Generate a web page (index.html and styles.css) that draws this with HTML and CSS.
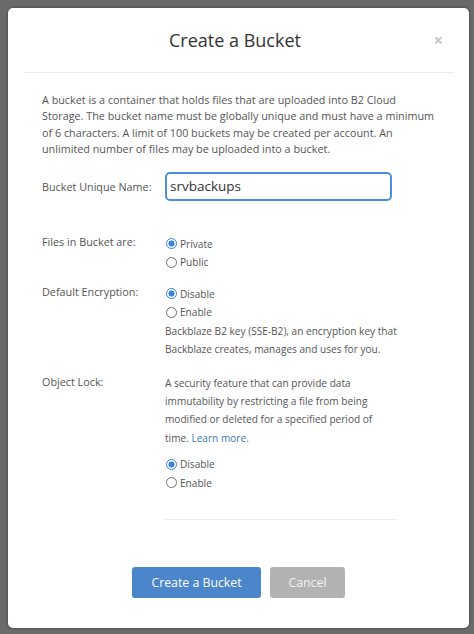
FILE: index.html
```html
<!DOCTYPE html>
<html lang="en">
<head>
<meta charset="utf-8">
<title>Create a Bucket</title>
<link rel="stylesheet" href="styles.css">
</head>
<body>
<div class="modal">
  <div class="modal-header">
    <h2 class="modal-title">Create a Bucket</h2>
    <span class="close">&times;</span>
  </div>
  <div class="modal-body">
    <p class="intro">A bucket is a container that holds files that are uploaded into B2 Cloud Storage. The bucket name must be globally unique and must have a minimum of 6 characters. A limit of 100 buckets may be created per account. An unlimited number of files may be uploaded into a bucket.</p>

    <div class="row row-name">
      <label class="row-label" for="bname">Bucket Unique Name:</label>
      <div class="row-field"><input id="bname" class="name-input" type="text" value="srvbackups"></div>
    </div>

    <div class="row row-files">
      <div class="row-label">Files in Bucket are:</div>
      <div class="row-field">
        <label class="opt"><input type="radio" name="files" checked><span>Private</span></label>
        <label class="opt"><input type="radio" name="files"><span>Public</span></label>
      </div>
    </div>

    <div class="row row-enc">
      <div class="row-label">Default Encryption:</div>
      <div class="row-field">
        <label class="opt"><input type="radio" name="enc" checked><span>Disable</span></label>
        <label class="opt"><input type="radio" name="enc"><span>Enable</span></label>
        <p class="note">Backblaze B2 key (SSE-B2), an encryption key that Backblaze creates, manages and uses for you.</p>
      </div>
    </div>

    <div class="row row-lock">
      <div class="row-label">Object Lock:</div>
      <div class="row-field">
        <p class="note lock-note">A security feature that can provide data immutability by restricting a file from being modified or deleted for a specified period of time. <a href="#" class="link">Learn more.</a></p>
        <label class="opt"><input type="radio" name="lock" checked><span>Disable</span></label>
        <label class="opt"><input type="radio" name="lock"><span>Enable</span></label>
        <hr class="field-rule">
      </div>
    </div>
  </div>
  <div class="modal-footer">
    <button class="btn btn-primary">Create a Bucket</button>
    <button class="btn btn-cancel">Cancel</button>
  </div>
</div>
</body>
</html>
```

FILE: styles.css
```css
* { box-sizing: border-box; }

html, body {
  margin: 0;
  height: 100%;
}

body {
  background: #6a6a6a;
  padding: 8px 5px 6px 8px;
  font-family: "Open Sans", "Noto Sans", "Liberation Sans", sans-serif;
  color: #555;
}

.modal {
  background: #fff;
  border-radius: 5px;
  height: 620px;
  width: 461px;
  display: flex;
  flex-direction: column;
  box-shadow: 0 0 3px rgba(0,0,0,0.45);
}

.modal-header {
  position: relative;
  height: 65px;
  margin: 0 15px 0 16px;
  border-bottom: 1px solid #ececec;
  display: flex;
  align-items: center;
  justify-content: center;
}

.modal-title {
  margin: 0 0 0 -8px;
  font-weight: 400;
  font-size: 18px;
  color: #333;
}

.close {
  position: absolute;
  right: 11px;
  top: 22px;
  font-size: 16px;
  line-height: 20px;
  color: #c4c4c4;
  font-weight: 700;
}

.modal-body {
  padding: 19px 30px 0 34px;
  flex: 1;
}

.intro {
  margin: 0;
  font-size: 10.8px;
  line-height: 16.4px;
}

.row {
  display: flex;
  font-size: 10.8px;
}

.row-label {
  width: 123px;
  flex: none;
  color: #555;
}

.row-field {
  width: 232px;
  flex: none;
}

.row-name {
  margin-top: 14px;
  align-items: center;
}

.name-input {
  width: 227px;
  height: 29px;
  border: 2px solid #4a8fdb;
  border-radius: 5px;
  padding: 0 3px;
  font-family: inherit;
  font-size: 13.5px;
  color: #333;
  outline: none;
}

.row-files {
  margin-top: 33px;
}

.opt {
  display: flex;
  align-items: center;
  height: 18.5px;
  font-size: 10.1px;
  color: #555;
}

.opt span { margin-left: 3px; }

.row-files .row-field,
.row-enc .row-field { padding-top: 1px; }

.row-enc {
  margin-top: 12px;
}

.row-lock {
  margin-top: 16px;
}

.opt input {
  -webkit-appearance: none;
  appearance: none;
  margin: 0 0 0 1px;
  width: 11px;
  height: 11px;
  border-radius: 50%;
  border: 1px solid #707070;
  background: #fff;
  flex: none;
}

.opt input:checked {
  border: 1.5px solid #3a82e0;
  background: radial-gradient(circle, #3a82e0 0 2.8px, #fff 3.3px);
}

.note {
  margin: 0;
  font-size: 10.1px;
  line-height: 18.2px;
  color: #555;
}

.lock-note {
  margin-bottom: 8px;
}

.link {
  color: #3b78b4;
  text-decoration: none;
}

.field-rule {
  border: 0;
  border-top: 1px solid #ebebeb;
  margin: 27px 0 0 0;
  width: 232px;
}

.modal-footer {
  display: flex;
  justify-content: center;
  gap: 9px;
  padding-bottom: 30px;
}

.btn {
  height: 31px;
  border: 0;
  border-radius: 3px;
  font-family: inherit;
  font-size: 12.3px;
  color: #fff;
  padding: 0;
}

.btn-primary {
  width: 129px;
  background: #4a86c9;
}

.btn-cancel {
  width: 75px;
  background: #b2b2b2;
  color: #f2f2f2;
}
```
